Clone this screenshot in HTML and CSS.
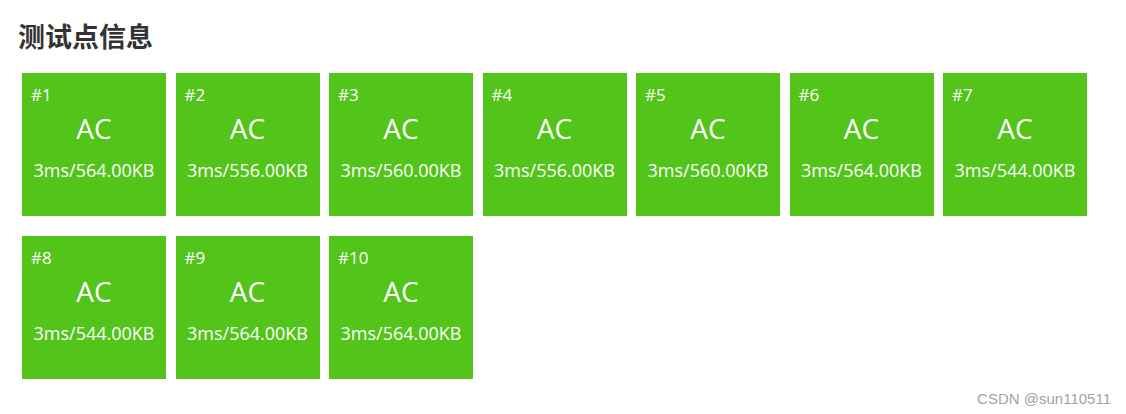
FILE: index.html
```html
<!DOCTYPE html>
<html lang="zh-CN">
<head>
    <meta charset="UTF-8">
    <meta name="viewport" content="width=device-width, initial-scale=1.0">
    <title>测试点信息</title>
    <link rel="stylesheet" href="styles.css">
</head>
<body>
    <main class="page">
        <h3 class="section-title">测试点信息</h3>
        <div class="case-list">
            <div class="case-box">
                <div class="case-id">#1</div>
                <div class="case-status">AC</div>
                <div class="case-usage">3ms/564.00KB</div>
            </div>
            <div class="case-box">
                <div class="case-id">#2</div>
                <div class="case-status">AC</div>
                <div class="case-usage">3ms/556.00KB</div>
            </div>
            <div class="case-box">
                <div class="case-id">#3</div>
                <div class="case-status">AC</div>
                <div class="case-usage">3ms/560.00KB</div>
            </div>
            <div class="case-box">
                <div class="case-id">#4</div>
                <div class="case-status">AC</div>
                <div class="case-usage">3ms/556.00KB</div>
            </div>
            <div class="case-box">
                <div class="case-id">#5</div>
                <div class="case-status">AC</div>
                <div class="case-usage">3ms/560.00KB</div>
            </div>
            <div class="case-box">
                <div class="case-id">#6</div>
                <div class="case-status">AC</div>
                <div class="case-usage">3ms/564.00KB</div>
            </div>
            <div class="case-box">
                <div class="case-id">#7</div>
                <div class="case-status">AC</div>
                <div class="case-usage">3ms/544.00KB</div>
            </div>
            <div class="case-box">
                <div class="case-id">#8</div>
                <div class="case-status">AC</div>
                <div class="case-usage">3ms/544.00KB</div>
            </div>
            <div class="case-box">
                <div class="case-id">#9</div>
                <div class="case-status">AC</div>
                <div class="case-usage">3ms/564.00KB</div>
            </div>
            <div class="case-box">
                <div class="case-id">#10</div>
                <div class="case-status">AC</div>
                <div class="case-usage">3ms/564.00KB</div>
            </div>
        </div>
    </main>

    <div class="watermark">CSDN @sun110511</div>
</body>
</html>
```

FILE: styles.css
```css
body {
    margin: 0;
    padding: 0;
    background-color: #fff;
    font-family: "Open Sans", "Noto Sans CJK SC", sans-serif;
    color: #333;
}

.page {
    padding: 21px 0 0 22px;
}

.section-title {
    margin: 0 0 20px -4px;
    font-size: 27px;
    line-height: 32px;
    font-weight: bold;
    color: #333;
}

.case-list {
    display: flex;
    flex-wrap: wrap;
    column-gap: 9.5px;
    row-gap: 20px;
}

.case-box {
    width: 144px;
    height: 143px;
    box-sizing: border-box;
    padding: 12px 9px;
    background-color: #52c41a;
    color: #fff;
}

.case-id {
    font-size: 17px;
    line-height: 20px;
}

.case-status {
    margin-top: 5px;
    font-size: 28px;
    line-height: 36px;
    text-align: center;
}

.case-usage {
    margin-top: 12px;
    font-size: 18px;
    line-height: 24px;
    text-align: center;
}

.watermark {
    position: absolute;
    right: 15px;
    bottom: 7px;
    font-family: "Liberation Sans", Arial, sans-serif;
    font-size: 15px;
    color: #a3a3a3;
}
```
